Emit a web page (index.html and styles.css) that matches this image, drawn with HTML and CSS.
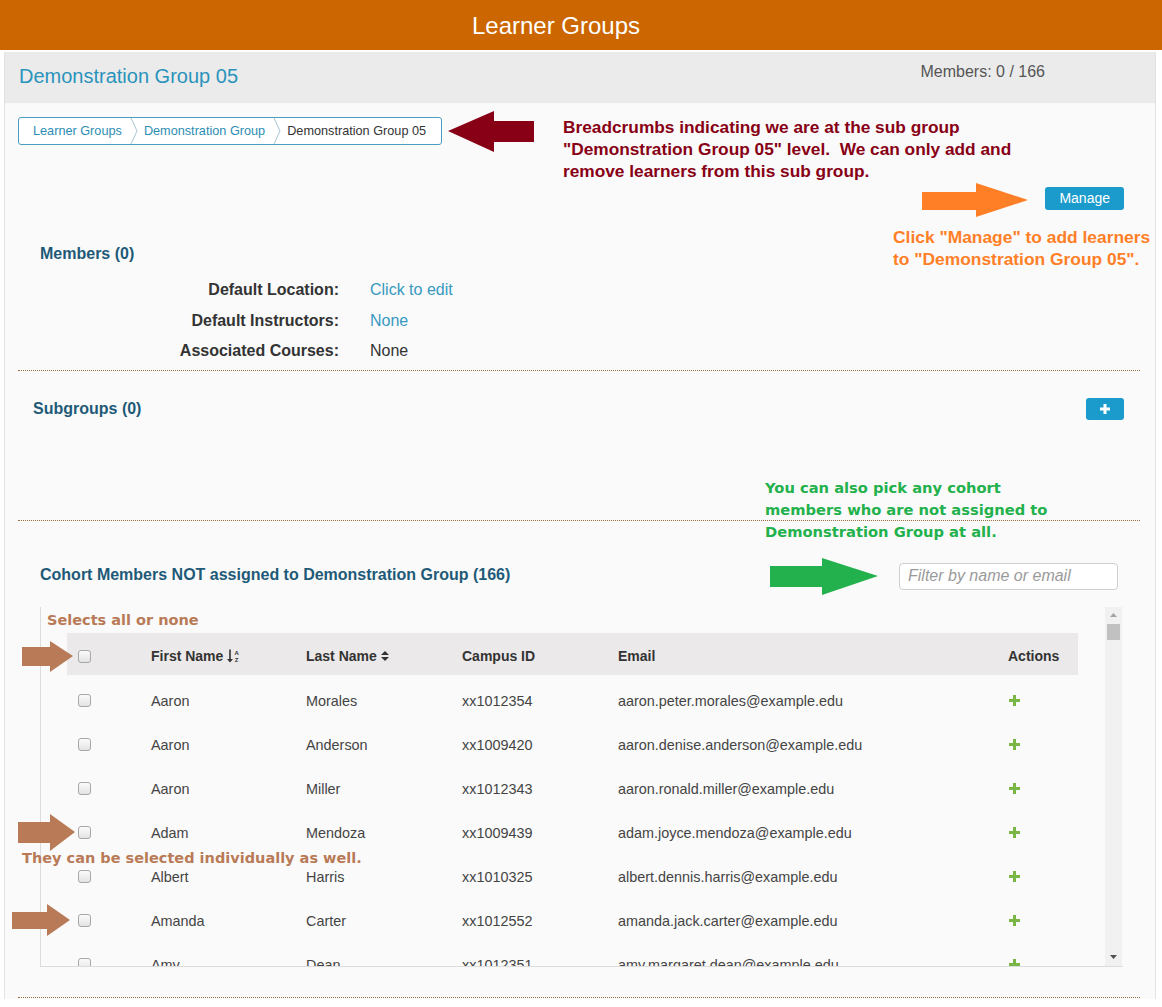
FILE: index.html
```html
<!DOCTYPE html>
<html lang="en">
<head>
<meta charset="utf-8">
<title>Learner Groups</title>
<link rel="stylesheet" href="styles.css">
</head>
<body>
<header class="topbar">Learner Groups</header>

<div class="panel">
  <div class="panel-head">
    <h1 class="group-title">Demonstration Group 05</h1>
    <div class="member-count">Members: 0 / 166</div>
  </div>

  <div class="panel-body">
    <nav class="crumbs">
      <span class="crumb link">Learner Groups</span>
      <svg class="chev" width="8" height="26" viewBox="0 0 8 26"><polyline points="1,0 7,13 1,26" fill="none" stroke="#a9c6d3" stroke-width="1"/></svg>
      <span class="crumb link">Demonstration Group</span>
      <svg class="chev" width="8" height="26" viewBox="0 0 8 26"><polyline points="1,0 7,13 1,26" fill="none" stroke="#a9c6d3" stroke-width="1"/></svg>
      <span class="crumb">Demonstration Group 05</span>
    </nav>

    <div class="manage-row"><button class="btn btn-manage">Manage</button></div>

    <section class="members">
      <h2 class="sec-title">Members (0)</h2>
      <dl class="props">
        <dt>Default Location:</dt><dd class="link">Click to edit</dd>
        <dt>Default Instructors:</dt><dd class="link">None</dd>
        <dt>Associated Courses:</dt><dd>None</dd>
      </dl>
    </section>

    <section class="subgroups">
      <h2 class="sec-title">Subgroups (0)</h2>
      <button class="btn btn-plus"><svg width="10" height="10" viewBox="0 0 10 10"><path d="M3.5 0h3v3.5H10v3H6.5V10h-3V6.5H0v-3h3.5z" fill="#fff"/></svg></button>
    </section>

    <section class="cohort">
      <div class="cohort-row">
        <h2 class="sec-title">Cohort Members NOT assigned to Demonstration Group (166)</h2>
        <input class="filter" type="text" placeholder="Filter by name or email">
      </div>

      <div class="listbox">
        <div class="list-scroll">
          <div class="grid-row head">
            <div class="c-cb"><span class="cb"></span></div>
            <div class="c">First Name <svg class="sort" width="13" height="14" viewBox="0 0 13 14"><path d="M2.2 0.5h1.6v9.5H6L3 13.5 0 10h2.2z" fill="#333"/><text x="7.5" y="6" font-size="6" font-family="Liberation Sans, sans-serif" fill="#333">A</text><text x="7.7" y="13.2" font-size="6" font-family="Liberation Sans, sans-serif" fill="#333">Z</text></svg></div>
            <div class="c">Last Name <svg class="sort" width="8" height="12" viewBox="0 0 8 12"><path d="M0 5L4 1 8 5z M0 7h8L4 11z" fill="#333"/></svg></div>
            <div class="c">Campus ID</div>
            <div class="c">Email</div>
            <div class="c">Actions</div>
          </div>

          <div class="grid-row">
            <div class="c-cb"><span class="cb"></span></div>
            <div class="c">Aaron</div><div class="c">Morales</div><div class="c">xx1012354</div>
            <div class="c">aaron.peter.morales@example.edu</div>
            <div class="c"><svg class="add" width="11" height="11" viewBox="0 0 11 11"><path d="M4 0h3v4h4v3H7v4H4V7H0V4h4z" fill="#79b646"/></svg></div>
          </div>
          <div class="grid-row">
            <div class="c-cb"><span class="cb"></span></div>
            <div class="c">Aaron</div><div class="c">Anderson</div><div class="c">xx1009420</div>
            <div class="c">aaron.denise.anderson@example.edu</div>
            <div class="c"><svg class="add" width="11" height="11" viewBox="0 0 11 11"><path d="M4 0h3v4h4v3H7v4H4V7H0V4h4z" fill="#79b646"/></svg></div>
          </div>
          <div class="grid-row">
            <div class="c-cb"><span class="cb"></span></div>
            <div class="c">Aaron</div><div class="c">Miller</div><div class="c">xx1012343</div>
            <div class="c">aaron.ronald.miller@example.edu</div>
            <div class="c"><svg class="add" width="11" height="11" viewBox="0 0 11 11"><path d="M4 0h3v4h4v3H7v4H4V7H0V4h4z" fill="#79b646"/></svg></div>
          </div>
          <div class="grid-row">
            <div class="c-cb"><span class="cb"></span></div>
            <div class="c">Adam</div><div class="c">Mendoza</div><div class="c">xx1009439</div>
            <div class="c">adam.joyce.mendoza@example.edu</div>
            <div class="c"><svg class="add" width="11" height="11" viewBox="0 0 11 11"><path d="M4 0h3v4h4v3H7v4H4V7H0V4h4z" fill="#79b646"/></svg></div>
          </div>
          <div class="grid-row">
            <div class="c-cb"><span class="cb"></span></div>
            <div class="c">Albert</div><div class="c">Harris</div><div class="c">xx1010325</div>
            <div class="c">albert.dennis.harris@example.edu</div>
            <div class="c"><svg class="add" width="11" height="11" viewBox="0 0 11 11"><path d="M4 0h3v4h4v3H7v4H4V7H0V4h4z" fill="#79b646"/></svg></div>
          </div>
          <div class="grid-row">
            <div class="c-cb"><span class="cb"></span></div>
            <div class="c">Amanda</div><div class="c">Carter</div><div class="c">xx1012552</div>
            <div class="c">amanda.jack.carter@example.edu</div>
            <div class="c"><svg class="add" width="11" height="11" viewBox="0 0 11 11"><path d="M4 0h3v4h4v3H7v4H4V7H0V4h4z" fill="#79b646"/></svg></div>
          </div>
          <div class="grid-row">
            <div class="c-cb"><span class="cb"></span></div>
            <div class="c">Amy</div><div class="c">Dean</div><div class="c">xx1012351</div>
            <div class="c">amy.margaret.dean@example.edu</div>
            <div class="c"><svg class="add" width="11" height="11" viewBox="0 0 11 11"><path d="M4 0h3v4h4v3H7v4H4V7H0V4h4z" fill="#79b646"/></svg></div>
          </div>
        </div>
        <div class="scrollbar">
          <div class="sb-btn"><svg width="7" height="4" viewBox="0 0 7 4"><path d="M0 4L3.5 0 7 4z" fill="#a3a3a3"/></svg></div>
          <div class="sb-track"><div class="sb-thumb"></div></div>
          <div class="sb-btn"><svg width="7" height="4" viewBox="0 0 7 4"><path d="M0 0h7L3.5 4z" fill="#505050"/></svg></div>
        </div>
      </div>
    </section>
  </div>
</div>

<!-- Annotation overlays -->
<svg class="note-arrow arrow-red" width="90" height="44" viewBox="0 0 90 44"><polygon points="2,21 48,1 48,11 88,11 88,32 48,32 48,42" fill="#880015"/></svg>
<div class="note note-red">Breadcrumbs indicating we are at the sub group<br>"Demonstration Group 05" level.&nbsp; We can only add and<br>remove learners from this sub group.</div>

<svg class="note-arrow arrow-orange" width="110" height="36" viewBox="0 0 110 36"><polygon points="2,10 56,10 56,1 108,18 56,35 56,28 2,28" fill="#ff7f27"/></svg>
<div class="note note-orange">Click "Manage" to add learners<br>to "Demonstration Group 05".</div>

<div class="note note-green">You can also pick any cohort<br>members who are not assigned to<br>Demonstration Group at all.</div>
<svg class="note-arrow arrow-green" width="112" height="41" viewBox="0 0 112 41"><polygon points="2,10 54,10 54,2 110,20 54,39 54,31 2,31" fill="#22b14c"/></svg>

<div class="note note-brown note-selall">Selects all or none</div>
<svg class="note-arrow arrow-brown-a" width="56" height="33" viewBox="0 0 56 33"><polygon points="2,7 30,7 30,1 53,16 30,32 30,26 2,26" fill="#b97a57"/></svg>
<svg class="note-arrow arrow-brown-b" width="62" height="40" viewBox="0 0 62 40"><polygon points="2,9 34,9 34,1 59,19 34,38 34,30 2,30" fill="#b97a57"/></svg>
<div class="note note-brown note-indiv">They can be selected individually as well.</div>
<svg class="note-arrow arrow-brown-c" width="62" height="34" viewBox="0 0 62 34"><polygon points="2,9 37,9 37,1 60,17 37,33 37,26 2,26" fill="#b97a57"/></svg>
</body>
</html>
```

FILE: styles.css
```css
* { box-sizing: border-box; }

html, body {
  margin: 0;
  padding: 0;
  background: #ffffff;
}

body {
  font-family: "Liberation Sans", Arial, sans-serif;
  color: #333;
  width: 1162px;
  min-height: 1007px;
}

.topbar {
  height: 50px;
  background: #cc6600;
  color: #fff;
  font-size: 24px;
  line-height: 52px;
  text-align: center;
  padding-right: 50px;
}

.panel {
  margin: 2px 6px 0 4px;
  border-left: 1px solid #e2e2e2;
  border-right: 1px solid #e2e2e2;
  background: #fafafa;
}

.panel-head {
  height: 51px;
  background: #ebebeb;
  display: flex;
  justify-content: space-between;
  align-items: flex-start;
  padding: 12px 110px 0 14px;
}

.group-title {
  margin: 0;
  font-size: 20px;
  font-weight: normal;
  line-height: 24px;
  color: #2a93bb;
}

.member-count {
  font-size: 16px;
  line-height: 18px;
  color: #555;
  margin-top: -1px;
}

.panel-body {
  padding: 0 15px 1px 13px;
}

/* breadcrumbs */
.crumbs {
  margin-top: 14px;
  display: inline-flex;
  align-items: center;
  height: 28px;
  border: 1px solid #4a9fc0;
  border-radius: 3px;
  background: #fff;
  padding: 0 15px 0 14px;
  font-size: 12.7px;
}

.crumb { color: #333; white-space: nowrap; }
.crumb.link { color: #2d8db3; }
.chev { display: block; margin: 0 6px 0 8px; }

/* manage */
.manage-row {
  margin-top: 42px;
  display: flex;
  justify-content: flex-end;
  padding-right: 16px;
}

.btn {
  border: none;
  background: #1b9bcc;
  color: #fff;
  border-radius: 3px;
  font-family: "Liberation Sans", Arial, sans-serif;
  cursor: pointer;
}

.btn-manage {
  height: 23px;
  padding: 0 14px;
  font-size: 14px;
  line-height: 23px;
}

.btn-plus {
  width: 38px;
  height: 22px;
  padding: 0;
  display: flex;
  align-items: center;
  justify-content: center;
}

.sec-title {
  margin: 0;
  font-size: 16px;
  font-weight: bold;
  line-height: 20px;
  color: #1e5a78;
}

/* members */
.members {
  margin-top: 34px;
  padding-bottom: 3px;
  border-bottom: 1px dotted #9c6b3c;
}

.members .sec-title { padding-left: 22px; }

.props {
  margin: 11px 0 0 0;
  display: grid;
  grid-template-columns: 321px 1fr;
  column-gap: 31px;
}

.props dt {
  text-align: right;
  font-weight: bold;
  font-size: 16px;
  line-height: 30.5px;
  color: #333;
}

.props dd {
  margin: 0;
  font-size: 16px;
  line-height: 30.5px;
  color: #333;
}

.props dd.link { color: #3799c0; }

/* subgroups */
.subgroups {
  display: flex;
  justify-content: space-between;
  align-items: center;
  padding: 27px 16px 100px 15px;
  border-bottom: 1px dotted #9c6b3c;
}

/* cohort */
.cohort {
  padding-top: 42px;
  border-bottom: 1px dotted #9c6b3c;
}

.cohort-row {
  display: flex;
  justify-content: space-between;
  align-items: flex-start;
  padding: 0 22px;
}

.cohort-row .sec-title { margin-top: 2px; }

.filter {
  width: 219px;
  height: 27px;
  border: 1px solid #cfcfcf;
  border-radius: 4px;
  background: #fff;
  padding: 0 8px;
  font-family: "Liberation Sans", Arial, sans-serif;
  font-size: 16px;
  color: #333;
}

.filter::placeholder {
  color: #9a9a9a;
  font-style: italic;
}

.listbox {
  margin: 17px 17px 30px 22px;
  height: 360px;
  display: flex;
  border-left: 1px solid #dcdcdc;
  border-bottom: 1px solid #dcdcdc;
}

.list-scroll {
  flex: 1;
  overflow: hidden;
  padding: 26px 27px 0 26px;
}

.grid-row {
  display: grid;
  grid-template-columns: 74px 155px 156px 156px 390px 80px;
  align-items: center;
  height: 44px;
  font-size: 14.4px;
  color: #444;
}

.grid-row.head {
  height: 42px;
  padding-top: 5px;
  margin-bottom: 4px;
  background: #ebe9e9;
  font-weight: bold;
  font-size: 14px;
  color: #333;
}

.c-cb { padding-left: 11px; display: flex; align-items: center; }
.c { padding-left: 10px; white-space: nowrap; display: flex; align-items: center; }

.sort { margin-left: 4px; display: block; }
.add { display: block; margin-left: 1px; margin-top: -1px; }

.cb {
  display: block;
  width: 13px;
  height: 13px;
  border: 1px solid #a8a8a8;
  border-radius: 3px;
  background: linear-gradient(#fbfbfb, #e3e3e3);
}

/* fake scrollbar */
.scrollbar {
  width: 17px;
  background: #f1f1f1;
  display: flex;
  flex-direction: column;
  margin-right: 1px;
}

.sb-btn {
  height: 17px;
  display: flex;
  align-items: center;
  justify-content: center;
}

.sb-track {
  flex: 1;
  position: relative;
  padding: 0 2px;
}

.sb-thumb {
  height: 16px;
  background: #c1c1c1;
}

/* annotations overlay */
.note-arrow {
  position: absolute;
  display: block;
}

.note {
  position: absolute;
  white-space: nowrap;
  font-weight: bold;
}

.arrow-red { left: 446px; top: 110px; }
.note-red {
  left: 563px;
  top: 116px;
  font-size: 17.3px;
  line-height: 22px;
  color: #880015;
}

.arrow-orange { left: 920px; top: 182px; }
.note-orange {
  left: 893px;
  top: 226px;
  font-size: 17.4px;
  line-height: 22px;
  color: #ff7f27;
}

.note-green {
  left: 765px;
  top: 477px;
  font-family: "DejaVu Sans", Verdana, sans-serif;
  font-size: 14.7px;
  line-height: 22px;
  color: #22b14c;
}
.arrow-green { left: 768px; top: 556px; }

.note-brown {
  font-family: "DejaVu Sans", Verdana, sans-serif;
  font-size: 14.5px;
  line-height: 18px;
  color: #b97a57;
}
.note-selall { left: 47px; top: 611px; }
.note-indiv { left: 22px; top: 849px; }

.arrow-brown-a { left: 20px; top: 640px; }
.arrow-brown-b { left: 16px; top: 813px; }
.arrow-brown-c { left: 10px; top: 903px; }
```
